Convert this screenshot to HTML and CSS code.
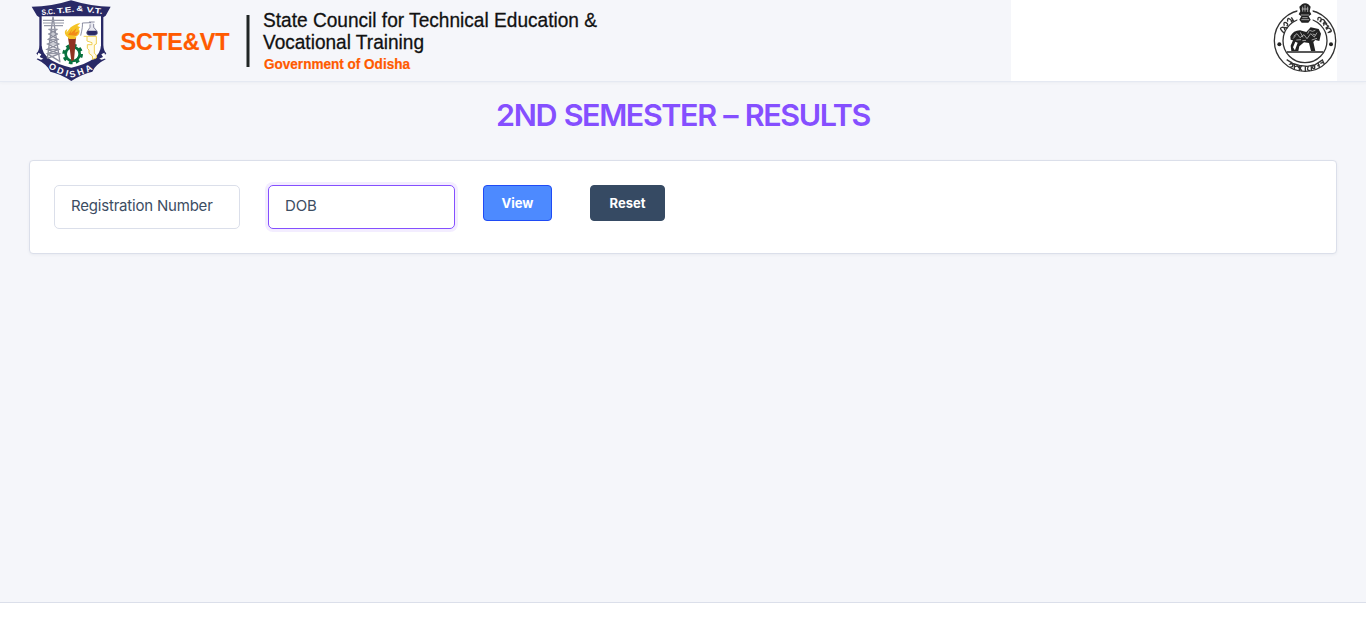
FILE: index.html
```
<!DOCTYPE html>
<html lang="en">
<head>
<meta charset="utf-8">
<title>2nd Semester - Results</title>
<link rel="stylesheet" href="styles.css">
</head>
<body>
<header class="header">
  <div class="brand">
    <svg class="crest" viewBox="0 0 285 243" role="img" aria-label="SCTE&amp;VT Odisha crest">
      <defs>
        <path id="crest-arc" d="M54 190Q84 220 140 232Q196 220 229 189"/>
      </defs>
      <path class="navy" d="M20 20Q80 20 138 1Q200 20 257 20L242 47L235 52V135Q236 153 244 160L235 171L242 178Q212 193 202 215Q170 222 139 243Q108 222 76 215Q66 193 35 178L42 171L34 160Q43 153 43 135V52L36 47Z"/>
      <path class="white" d="M50 49H228V136Q226 184 139 203Q52 184 50 136Z"/>
      <path class="white" d="M40 158L49 163L44 171L55 176L48 179L35 174ZM238 158L229 163L234 171L223 176L230 179L243 174Z"/>
      <path class="tower" d="M84 50L67 175M84 50L105 187M73 88L96 102L70 118L101 132L66 148L103 161L67 175M96 88L72 102L99 118L68 132L102 148L67 161L104 184"/>
      <path class="tower-bars" d="M54 61H117M54 69H117M57 77H114M70 88H98M70 102H99M69 118H101M68 132H102M67 148H104M66 161H105"/>
      <path class="map" d="M176 109H214V132L208 135V160L214 165V174L203 178L202 168L192 160V150L187 145V134H201V128L186 123V109"/>
      <path class="gold" d="M123 107Q114 93 127 87L124 98L137 82Q158 68 166 70L157 78L166 82Q157 87 164 92Q164 107 150 110Q132 118 123 107Z"/>
      <path class="orange" d="M129 105L142 86L137 100L155 84L149 98L162 94L153 107Z"/>
      <path class="silver" d="M195 68H207V78L219 94Q221 107 204 107H190Q181 103 187 91L195 82Z"/>
      <path class="navy" d="M187 92H215Q220 102 211 105H190Q181 101 187 92Z"/>
      <path class="flask" d="M167 107Q174 78 172 69L198 68M195 73V82L186 96Q184 105 192 106H210Q220 104 216 94L206 82V72M192 66H209"/>
      <circle class="gear" cx="143" cy="162" r="21"/>
      <circle class="gear-teeth" cx="143" cy="162" r="27"/>
      <path class="torch" d="M129 113H153L147 180L139 184L135 152Z"/>
      <path class="gold" d="M128 110H155L151 117H131Z"/>
      <text class="crest-top" x="50" y="44" transform="rotate(-5 60 38)" textLength="40" lengthAdjust="spacingAndGlyphs">S.C.</text>
      <text class="crest-top" x="96" y="39" transform="rotate(-6 110 33)" textLength="52" lengthAdjust="spacingAndGlyphs">T.E.</text>
      <text class="crest-top" x="154" y="32" transform="rotate(5 154 32)" textLength="20" lengthAdjust="spacingAndGlyphs">&amp;</text>
      <text class="crest-top" x="184" y="37" transform="rotate(7 190 32)" textLength="49" lengthAdjust="spacingAndGlyphs">V.T.</text>
      <text class="crest-bottom"><textPath href="#crest-arc" startOffset="20">ODISHA</textPath></text>
    </svg>
    <svg class="wordmark" viewBox="0 0 490 81">
      <text class="wm-orange wm-short" x="0.500" y="49.500" textLength="109" lengthAdjust="spacingAndGlyphs">SCTE&amp;VT</text>
      <rect class="wm-rule" x="126.500" y="15" width="3" height="52"/>
      <text class="wm-black" x="143" y="27" textLength="334" lengthAdjust="spacingAndGlyphs">State Council for Technical Education &amp;</text>
      <text class="wm-black" x="143" y="48.500" textLength="161" lengthAdjust="spacingAndGlyphs">Vocational Training</text>
      <text class="wm-orange wm-gov" x="144" y="69" textLength="146" lengthAdjust="spacingAndGlyphs">Government of Odisha</text>
    </svg>
  </div>
  <div class="state">
    <svg class="emblem" viewBox="0 0 216 243" role="img" aria-label="Government of Odisha emblem">
      <circle class="ring" cx="120" cy="122" r="92"/>
      <circle class="ring" cx="120" cy="122" r="66"/>
      <circle cx="43" cy="133" r="6"/><circle cx="198" cy="133" r="6"/>
      <path class="ground" d="M66 156H174"/>
      <path d="M76 109Q85 91 105 91L124 96L137 82L161 87L168 101L163 123L151 120L145 126L151 153H138L132 129L117 127L103 139L100 153H89L98 128L91 125L84 142L91 153H79L77 137L84 121L77 119Z"/>
      <path class="etch" d="M86 109L96 101L105 113L117 104L126 116L137 101L148 111L156 98M94 120L108 119M134 91L142 94L151 91M140 120L156 115M128 101L133 91M106 97L114 112M112 122L123 121M143 102L151 105M84 116L92 107"/>
      <path class="white" d="M97 8H143V65H97Z"/>
      <path d="M111 13Q120 6 130 13L137 20L134 34L139 43L131 49L137 59L130 68H110L103 59L109 49L101 43L106 34L103 20Z"/>
      <path class="etch" d="M113 20V35M120 15V35M128 20V36M108 45H132M112 53H128M109 59H132M110 27H130"/>
      <g class="script">
        <path d="M51 93Q42 84 51 82T59 91M51 93L57 99M58 77Q54 65 63 68Q72 73 65 79M57 82L68 84M68 65Q66 52 74 57T79 67L83 61M79 52L87 65"/>
        <path d="M159 61Q157 50 165 53T164 65M167 67Q167 55 175 59T174 72M178 62L186 73M176 77Q176 67 185 74T182 85L192 77M184 89Q190 80 197 88T188 98M191 96L199 92"/>
        <path d="M65 179L83 190L103 196L127 199L151 194L174 179M72 184Q83 185 76 192Q87 190 82 200L75 202M88 193V208M88 201Q98 195 101 203M103 197V213M109 198Q102 207 111 212M121 199V215M130 199Q123 212 135 212M139 198V213M145 196Q139 208 149 205V194M159 189L164 204M157 198L164 194M172 180L178 193M166 190L174 187"/>
      </g>
    </svg>
  </div>
</header>
<main class="content">
  <h1 class="title">2ND SEMESTER – RESULTS</h1>
  <form class="card">
    <input class="field" type="text" value="Registration Number" aria-label="Registration Number">
    <input class="field field-active" type="text" value="DOB" aria-label="Date of birth">
    <button class="btn btn-view" type="button">View</button>
    <button class="btn btn-reset" type="button">Reset</button>
  </form>
</main>
<footer class="footer"></footer>
</body>
</html>
```
FILE: styles.css
```
* { box-sizing: border-box; }
body {
  margin: 0;
  height: 100vh;
  overflow: hidden;
  display: flex;
  flex-direction: column;
  background: #f5f6fa;
  font-family: "Inter", "Liberation Sans", sans-serif;
}
.header {
  height: 82px;
  flex: none;
  display: flex;
  justify-content: space-between;
  padding: 0 29px 0 25px;
  border-bottom: 1px solid #e5e9f2;
  box-shadow: 0 1px 3px rgba(54, 74, 99, 0.05);
}
.brand { display: flex; }
.crest { width: 95px; height: 81px; display: block; }
.wordmark { width: 490px; height: 81px; display: block; overflow: visible; font-family: "Liberation Sans", Arial, sans-serif; }
.wm-orange { fill: #ff5a00; stroke: #ff5a00; stroke-width: 0.200px; font-weight: 700; }
.wm-short { font-size: 24.500px; }
.wm-gov { font-size: 14px; }
.wm-black { fill: #111; stroke: #111; stroke-width: 0.300px; font-size: 20.500px; }
.wm-rule { fill: #202524; }

.navy { fill: #292966; }
.white { fill: #fff; }
.gold { fill: #f5c426; }
.orange { fill: #f28a18; }
.silver { fill: #e8e8ef; }
.map { fill: #fffbe8; stroke: #f0cf52; stroke-width: 3px; }
.tower { fill: none; stroke: #8b8e9d; stroke-width: 4px; }
.tower-bars { fill: none; stroke: #9699a7; stroke-width: 3.500px; }
.flask { fill: none; stroke: #555776; stroke-width: 2px; }
.gear { fill: #fff; stroke: #08713e; stroke-width: 8px; }
.gear-teeth { fill: none; stroke: #08713e; stroke-width: 8px; stroke-dasharray: 11 10.200; }
.torch { fill: #8f3322; }
.crest-top { fill: #fff; font: 700 23px "Liberation Sans", sans-serif; }
.crest-bottom { fill: #fff; font: 700 27px "Liberation Sans", sans-serif; letter-spacing: 8px; }

.state { width: 326px; height: 81px; display: flex; justify-content: flex-end; background: #fff; }
.emblem { width: 72px; height: 81px; display: block; fill: #222; }
.emblem .white { fill: #fff; }
.ring { fill: none; stroke: #333; stroke-width: 4px; }
.ground { stroke: #222; stroke-width: 4px; }
.etch { fill: none; stroke: #bbb; stroke-width: 2.500px; }
.script { fill: none; stroke: #333; stroke-width: 4px; }

.content { flex: 1; padding: 0 29px; }
.title {
  margin: 14px 0 26px;
  text-align: center;
  color: #854fff;
  font-size: 30.500px;
  line-height: 38px;
  font-weight: 600;
  letter-spacing: -1.400px;
  word-spacing: 1.300px;
}
.card {
  display: flex;
  align-items: flex-start;
  height: 94px;
  padding: 24px;
  background: #fff;
  border: 1px solid #dbdfea;
  border-radius: 4px;
  box-shadow: 0 1px 3px rgba(54, 74, 99, 0.06);
}
.field {
  width: 186px;
  height: 44px;
  margin-right: 28px;
  padding: 0 16px 3px;
  border: 1px solid #dbdfea;
  border-radius: 5px;
  outline: 0;
  background: #fff;
  color: #3c4d62;
  font: 400 15px "Inter", sans-serif;
  letter-spacing: -0.200px;
}
.field-active {
  width: 187px;
  border-color: #854fff;
  box-shadow: 0 0 0 3px rgba(133, 79, 255, 0.1);
}
.btn {
  height: 36px;
  padding: 0;
  border: 1px solid;
  border-radius: 4px;
  color: #fff;
  font: 700 13px/20px "Inter", sans-serif;
}
.btn-view { width: 69px; margin-right: 38px; background: #4d8aff; border-color: #1f4bf5; }
.btn-reset { width: 75px; background: #364a63; border-color: #364a63; }
.footer { flex: none; height: 41px; background: #fff; border-top: 1px solid #dbdfea; }
```
